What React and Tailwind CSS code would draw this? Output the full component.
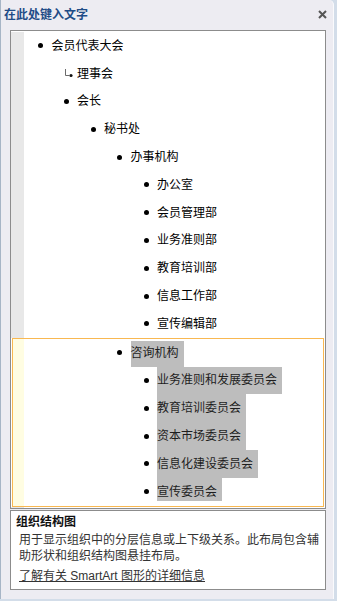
import React from 'react'

const font = "font-['Liberation_Sans','Noto_Sans_CJK_SC',sans-serif]"

// level -> left padding of the row (text x = 46 + pad + 22 - 22...)
const indent = {
  0: 'pl-[5.5px]',
  1: 'pl-[31px]',
  2: 'pl-[58px]',
  3: 'pl-[84.5px]',
  4: 'pl-[111px]',
}

const topRows = [
  { level: 0, text: '会员代表大会' },
  { level: 1, text: '理事会', arrow: true },
  { level: 1, text: '会长' },
  { level: 2, text: '秘书处' },
  { level: 3, text: '办事机构' },
  { level: 4, text: '办公室' },
  { level: 4, text: '会员管理部' },
  { level: 4, text: '业务准则部' },
  { level: 4, text: '教育培训部' },
  { level: 4, text: '信息工作部' },
  { level: 4, text: '宣传编辑部' },
]

const selectedRows = [
  { level: 3, text: '咨询机构', hl: 'mt-[2px] pb-[2px]' },
  { level: 4, text: '业务准则和发展委员会', hl: '' },
  { level: 4, text: '教育培训委员会', hl: '' },
  { level: 4, text: '资本市场委员会', hl: '' },
  { level: 4, text: '信息化建设委员会', hl: '' },
  { level: 4, text: '宣传委员会', hl: 'mb-[5px] pt-[5px]' },
]

const Bullet = ({ arrow }) => {
  if (arrow) {
    return (
      <span className="w-[22px] flex items-center pl-[10px]">
        <svg width="9" height="10" viewBox="0 0 9 10">
          <path d="M0.5 0 V6.5 H4" fill="none" stroke="#6b6b6b" strokeWidth="1" />
          <circle cx="6" cy="6.5" r="1.6" fill="#111" />
        </svg>
      </span>
    )
  }
  return (
    <span className="w-[22px] flex items-center justify-center">
      <span className="w-[5px] h-[5px] rounded-full bg-black"></span>
    </span>
  )
}

const Row = ({ level, text, arrow, hl }) => (
  <div className={`flex items-stretch h-[27.8px] ${indent[level]}`}>
    <Bullet arrow={arrow} />
    {hl !== undefined ? (
      <span className={`flex items-center bg-[#bdbdbd] pr-[5px] text-[#1e1e1e] ${hl}`}>{text}</span>
    ) : (
      <span className="flex items-center text-black">{text}</span>
    )}
  </div>
)

export default function App() {
  return (
    <div className={`w-[337px] h-[601px] bg-[#d3dde9] flex ${font}`}>
      <div className="w-[334px] h-[599px] flex flex-col bg-[#edecf2] border-l border-[#a7b5c6] border-r border-r-[#fafafc] rounded-tr-[5px]">
        {/* title bar */}
        <div className="h-[30px] flex items-center justify-between pl-[3px] pr-[6px]">
          <span className="text-[12px] font-bold text-[#1f4c87] leading-[16px]">在此处键入文字</span>
          <svg width="9" height="9" viewBox="0 0 9 9" className="mt-[-1px]">
            <path d="M1 1 L8 8 M8 1 L1 8" stroke="#555" strokeWidth="2" />
          </svg>
        </div>

        {/* text pane */}
        <div className="ml-[9px] w-[316px] h-[479px] border border-[#8c8c8c] bg-white flex flex-col text-[12px] leading-[16px]">
          <div className="flex pt-[1px]">
            <div className="w-[13px] bg-[#e8e8e8]"></div>
            <div className="flex flex-col">
              {topRows.map((r, i) => (
                <Row key={i} {...r} />
              ))}
            </div>
          </div>
          <div className="mx-[1px] border border-[#f9b851] flex">
            <div className="w-[11px] bg-[#fffde2]"></div>
            <div className="flex flex-col">
              {selectedRows.map((r, i) => (
                <Row key={i} {...r} />
              ))}
            </div>
          </div>
          <div className="flex-1 flex">
            <div className="w-[13px] bg-[#e8e8e8]"></div>
          </div>
        </div>

        {/* description pane */}
        <div className="ml-[9px] mt-[1px] w-[316px] h-[80px] border border-[#8c8c8c] bg-white pl-[5px] pt-[3px] text-[12px]">
          <div className="font-bold text-[#111] leading-[16px]">组织结构图</div>
          <div className="mt-[3px] pl-[3px] text-[#333] leading-[15.5px] whitespace-nowrap">
            用于显示组织中的分层信息或上下级关系。此布局包含辅
            <br />
            助形状和组织结构图悬挂布局。
          </div>
          <div className="mt-[4px] pl-[3px] leading-[16px]">
            <span className="underline text-[#333] cursor-pointer">了解有关 SmartArt 图形的详细信息</span>
          </div>
        </div>
      </div>
    </div>
  )
}
